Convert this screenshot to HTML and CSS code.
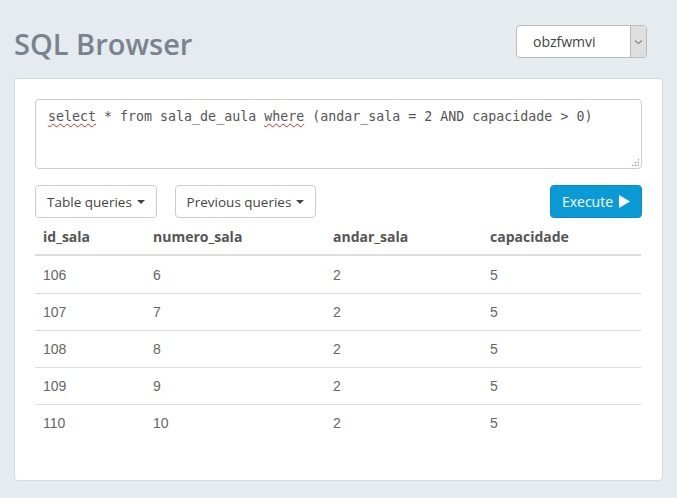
FILE: index.html
```html
<!DOCTYPE html>
<html>
<head>
<meta charset="utf-8">
<link rel="stylesheet" href="styles.css">
</head>
<body>
<div class="page">
  <header class="topbar">
    <h1 class="title">SQL Browser</h1>
    <div class="db-select">
      <span class="db-name">obzfwmvi</span>
      <span class="db-arrow"><svg width="9" height="6" viewBox="0 0 9 6"><path d="M1 1.5 L4.5 4.5 L8 1.5" fill="none" stroke="#555" stroke-width="1"/></svg></span>
    </div>
  </header>
  <main class="card">
    <div class="editor"><span class="sp">select</span> * from sala_de_aula <span class="sp">where</span> (andar_sala = 2 AND capacidade &gt; 0)<span class="grip"></span></div>
    <div class="toolbar">
      <button class="btn btn-table">Table queries <span class="caret"></span></button>
      <button class="btn btn-prev">Previous queries <span class="caret"></span></button>
      <button class="btn btn-primary">Execute <svg class="play" width="11" height="13" viewBox="0 0 11 13"><path d="M0 0 L11 6.5 L0 13 Z" fill="#fff"/></svg></button>
    </div>
    <table class="results">
      <thead>
        <tr><th class="c1">id_sala</th><th class="c2">numero_sala</th><th class="c3">andar_sala</th><th class="c4">capacidade</th></tr>
      </thead>
      <tbody>
        <tr><td>106</td><td>6</td><td>2</td><td>5</td></tr>
        <tr><td>107</td><td>7</td><td>2</td><td>5</td></tr>
        <tr><td>108</td><td>8</td><td>2</td><td>5</td></tr>
        <tr><td>109</td><td>9</td><td>2</td><td>5</td></tr>
        <tr><td>110</td><td>10</td><td>2</td><td>5</td></tr>
      </tbody>
    </table>
  </main>
</div>
</body>
</html>
```
FILE: styles.css
```css
html, body {
  margin: 0;
  padding: 0;
}
body {
  background-color: #e5ebee;
  font-family: "Open Sans", "Noto Sans", sans-serif;
  width: 677px;
  height: 498px;
  overflow: hidden;
}
.page {
  padding: 0 14px;
}
.topbar {
  display: flex;
  justify-content: space-between;
  align-items: flex-start;
  height: 78px;
}
.title {
  margin: 24px 0 0 0;
  font-size: 29px;
  font-weight: 600;
  color: #7a828d;
  line-height: 40px;
}
.db-select {
  margin-top: 25px;
  margin-right: 16px;
  width: 131px;
  height: 33px;
  box-sizing: border-box;
  border: 1px solid #b8bcc0;
  border-radius: 4px;
  background: #fff;
  display: flex;
  overflow: hidden;
}
.db-name {
  flex: 1;
  font-size: 14px;
  color: #444;
  padding-left: 16px;
  line-height: 31px;
}
.db-arrow {
  width: 15px;
  background: #dedede;
  border-left: 1px solid #b8bcc0;
  display: flex;
  align-items: center;
  justify-content: center;
}
.card {
  background: #fff;
  border: 1px solid #d3dce4;
  border-radius: 4px;
  height: 403px;
  box-sizing: border-box;
  padding: 20px;
}
.editor {
  position: relative;
  height: 70px;
  box-sizing: border-box;
  border: 1px solid #cccccc;
  border-radius: 4px;
  padding: 8px 12px;
  font-family: "DejaVu Sans Mono", "Liberation Mono", monospace;
  font-size: 13.3px;
  line-height: 18px;
  color: #555;
}
.sp {
  text-decoration: underline wavy #e02020;
  text-decoration-thickness: 1px;
  text-underline-offset: 2px;
}
.grip {
  position: absolute;
  right: 2px;
  bottom: 2px;
  width: 8px;
  height: 8px;
  background-image: radial-gradient(circle, #aaa 0.9px, transparent 1.1px);
  background-size: 3px 3px;
  clip-path: polygon(100% 0, 100% 100%, 0 100%);
}
.toolbar {
  display: flex;
  gap: 18px;
  margin-top: 16px;
}
.btn {
  height: 33px;
  box-sizing: border-box;
  border: 1px solid #cccccc;
  border-radius: 4px;
  background: #fff;
  color: #444;
  font-family: "Open Sans", "Noto Sans", sans-serif;
  font-size: 13.5px;
  padding: 0;
  white-space: nowrap;
  display: flex;
  align-items: center;
  justify-content: center;
  gap: 5px;
}
.btn-table { width: 122px; }
.btn-prev { width: 141px; }
.caret {
  display: inline-block;
  width: 0;
  height: 0;
  border-left: 4px solid transparent;
  border-right: 4px solid transparent;
  border-top: 4px solid #444;
  margin-top: 1px;
}
.btn-primary {
  margin-left: auto;
  width: 92px;
  background: #0a9bd7;
  border-color: #0a8cc4;
  color: #fff;
  font-size: 14px;
  gap: 6px;
}
.results {
  width: 606px;
  border-collapse: collapse;
  margin-top: 1px;
}
.results th {
  text-align: left;
  font-family: "Open Sans", "Noto Sans", sans-serif;
  font-size: 14px;
  font-weight: 700;
  color: #555;
  padding: 0 8px;
  height: 35px;
  border-bottom: 2px solid #dddddd;
}
.results td {
  font-family: "Liberation Sans", Arial, sans-serif;
  font-size: 14px;
  color: #666;
  padding: 0 8px;
  height: 36px;
  border-top: 1px solid #dddddd;
}
.results tbody tr:first-child td { border-top: none; height: 37px; }
.c1 { width: 94px; }
.c2 { width: 164px; }
.c3 { width: 141px; }
.c4 { width: 143px; }
```
